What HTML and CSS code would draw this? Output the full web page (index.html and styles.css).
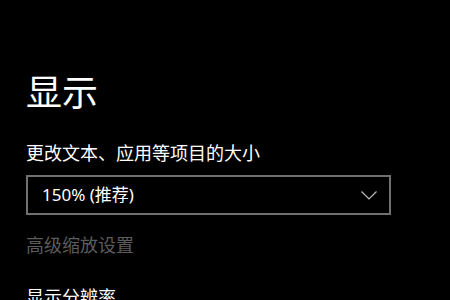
FILE: index.html
```html
<!DOCTYPE html>
<html lang="zh-CN">
<head>
<meta charset="utf-8">
<link rel="stylesheet" href="styles.css">
</head>
<body>
<main class="page">
  <h1 class="title">显示</h1>
  <div class="label">更改文本、应用等项目的大小</div>
  <div class="select">
    <span class="select-value">150% (推荐)</span>
    <svg class="chevron" width="16" height="9" viewBox="0 0 16 9"><path d="M0.5 0.5 L8 8 L15.5 0.5" fill="none" stroke="#bdbdbd" stroke-width="1.2"/></svg>
  </div>
  <div class="link">高级缩放设置</div>
  <div class="section">显示分辨率</div>
</main>
</body>
</html>
```
FILE: styles.css
```css
html, body {
  margin: 0;
  padding: 0;
  background: #000;
  height: 100%;
  overflow: hidden;
}
.page {
  padding: 70px 0 0 26px;
  font-family: "Noto Sans CJK SC", "Noto Sans", sans-serif;
  color: #fff;
}
.title {
  margin: 0;
  font-size: 36px;
  font-weight: 400;
  line-height: 40px;
}
.label {
  margin-top: 30px;
  font-size: 18px;
  line-height: 24px;
  color: #fff;
}
.select {
  margin-top: 11px;
  height: 36px;
  width: 335px;
  border: 2px solid #707070;
  display: flex;
  align-items: center;
  justify-content: space-between;
  padding: 0 12px 0 14px;
  box-sizing: content-box;
}
.select-value {
  font-family: "Noto Sans", "Noto Sans CJK SC", sans-serif;
  font-size: 17px;
  line-height: 24px;
}
.chevron {
  display: block;
}
.link {
  margin-top: 17px;
  font-size: 18px;
  line-height: 24px;
  color: #5c5c5c;
}
.section {
  margin-top: 28px;
  font-size: 18px;
  line-height: 24px;
  color: #fff;
}
```
